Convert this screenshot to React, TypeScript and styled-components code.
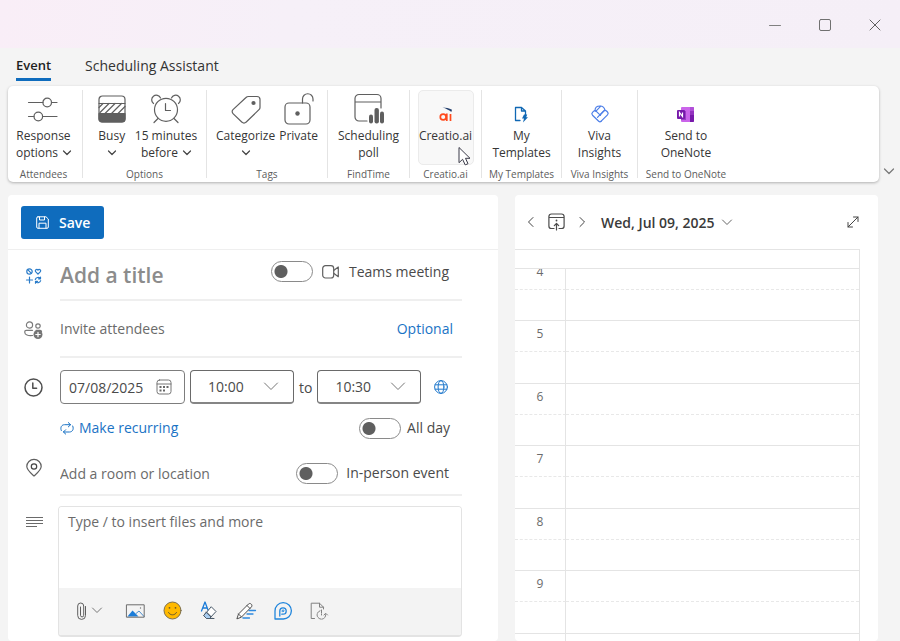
import React from 'react';
import styled, { createGlobalStyle, css } from 'styled-components';

const GlobalStyle = createGlobalStyle`
  *, *::before, *::after { box-sizing: border-box; }
  body { margin: 0; background: #f4f4f4; }
  body, button, input, select, textarea {
    font-family: "Open Sans", "Noto Sans", sans-serif;
    font-size: 14px;
    color: #4a4a4a;
  }
  button { background: none; border: 0; padding: 0; cursor: pointer; }
  svg { display: block; flex: none; overflow: visible; }
`;

const Window = styled.div`
  display: flex;
  flex-direction: column;
  height: 100vh;
  overflow: hidden;
`;

/* Window chrome */
const TitleBar = styled.header`
  display: flex;
  justify-content: flex-end;
  align-items: center;
  gap: 34px;
  flex: none;
  height: 48px;
  padding: 2px 17px 0 0;
  background: linear-gradient(100deg, #f9eef7 0%, #f6f0f8 32%, #f5eff7 100%);
`;
const ChromeButton = styled.button`
  display: grid;
  place-items: center;
  width: 16px;
  height: 16px;
`;

/* Tabs */
const TabBar = styled.nav`
  display: flex;
  gap: 34px;
  flex: none;
  height: 38px;
  padding: 6px 16px 0;
`;
const Tab = styled.button<{ $active?: boolean }>`
  height: 27px;
  line-height: 23px;
  padding-bottom: 4px;
  color: #333;
  ${p => p.$active && css`
    font-weight: 600;
    font-size: 13px;
    color: #1f1f1f;
    background: linear-gradient(#0f6cbd, #0f6cbd) bottom / 100% 3px no-repeat;
  `}
`;

/* Ribbon */
const RibbonRow = styled.div`
  display: flex;
  align-items: flex-end;
  flex: none;
  padding-left: 8px;
`;
const Ribbon = styled.section`
  display: flex;
  flex: 1;
  height: 96px;
  padding-top: 4px;
  background: #fff;
  border-radius: 5px;
  box-shadow: 0 1px 3px rgba(0, 0, 0, 0.28);
`;
const RibbonToggle = styled.button`
  display: grid;
  place-items: center;
  width: 21px;
  height: 22px;
  padding-right: 2px;
`;
const Group = styled.div<{ $width: number; $end?: number }>`
  display: flex;
  flex-direction: column;
  flex: none;
  width: ${p => p.$width}px;
  padding-right: ${p => p.$end ?? 0}px;
`;
const GroupButtons = styled.div<{ $gap?: number; $inset?: number }>`
  display: flex;
  justify-content: center;
  flex: none;
  gap: ${p => p.$gap ?? 0}px;
  height: 75px;
  padding-left: ${p => p.$inset ?? 0}px;
`;
const GroupLabel = styled.span`
  flex: none;
  font-size: 10px;
  line-height: 19px;
  text-align: center;
  color: #5c5c5c;
  white-space: nowrap;
`;
const Divider = styled.span`
  flex: none;
  width: 1px;
  height: 88px;
  background: #e4e4e4;
`;
const RibbonButton = styled.button<{ $hover?: boolean }>`
  position: relative;
  display: flex;
  flex-direction: column;
  align-items: center;
  font-size: 12px;
  line-height: 17px;
  color: #363636;
  white-space: nowrap;
  border: 1px solid transparent;
  border-width: 1px 0;
  border-radius: 5px;
  ${p => p.$hover && css`
    width: 56px;
    border: 1px solid #ebebeb;
    background: #f8f8f8;
  `}
`;
const RibbonIcon = styled.span<{ $small?: boolean }>`
  display: grid;
  place-items: center;
  height: 36px;
  padding-top: ${p => (p.$small ? 10 : 0)}px;
`;
const Line = styled.span`
  display: flex;
  align-items: center;
  justify-content: center;
  gap: 5px;
  height: 17px;
`;
const Pointer = styled.svg`
  position: absolute;
  left: 39px;
  top: 55px;
`;

/* Two panels */
const Main = styled.main`
  display: grid;
  grid-template-columns: 490fr 363fr;
  gap: 17px;
  flex: 1;
  min-height: 0;
  margin-top: 13px;
  padding: 0 22px 0 8px;
`;
const Panel = styled.section`
  display: flex;
  flex-direction: column;
  min-width: 0;
  min-height: 0;
  background: #fff;
  border-radius: 4px;
`;
const CommandBar = styled.div`
  flex: none;
  height: 55px;
  padding: 11px 13px 0;
  border-bottom: 1px solid #efefef;
`;
const SaveButton = styled.button`
  display: flex;
  align-items: center;
  gap: 10px;
  height: 33px;
  padding: 0 14px 0 15px;
  border-radius: 3px;
  background: #0f6cbd;
  color: #fff;
  font-size: 14px;
  font-weight: 600;
`;

/* Form */
const Form = styled.form`
  display: flex;
  flex-direction: column;
  padding-right: 36px;
`;
const Row = styled.div<{ $height: number }>`
  display: grid;
  grid-template-columns: 52px 1fr;
  height: ${p => p.$height}px;
`;
const IconCell = styled.div`
  display: grid;
  place-items: center;
  padding-right: 1px;
`;
const Cell = styled.div<{ $ruled?: boolean; $end?: number; $top?: number }>`
  display: flex;
  align-items: center;
  min-width: 0;
  padding-top: ${p => p.$top ?? 0}px;
  padding-right: ${p => p.$end ?? 0}px;
  border-bottom: ${p => (p.$ruled ? '2px solid #efefef' : '0')};
`;
const Field = styled.input<{ $title?: boolean }>`
  flex: 1;
  min-width: 0;
  padding: 0;
  border: 0;
  outline: 0;
  background: none;
  font-size: ${p => (p.$title ? 21 : 14)}px;
  font-weight: ${p => (p.$title ? 600 : 400)};
  &::placeholder { color: ${p => (p.$title ? '#8c8c8c' : '#6b6b6b')}; opacity: 1; }
`;
const SwitchLabel = styled.label<{ $gap: number; $raised?: boolean }>`
  display: flex;
  align-items: center;
  gap: ${p => p.$gap}px;
  line-height: 20px;
  white-space: nowrap;
  ${p => p.$raised && css`
    align-self: flex-start;
    margin-top: 11px;
  `}
`;
const Switch = styled.input`
  appearance: none;
  flex: none;
  width: 42px;
  height: 21px;
  margin: 0;
  border: 1px solid #8a8a8a;
  border-radius: 11px;
  background: radial-gradient(circle at 9px 50%, #5f5f5f 6px, transparent 7px) #fff;
  &:checked {
    border-color: #0f6cbd;
    background: radial-gradient(circle at 31px 50%, #fff 6px, transparent 7px) #0f6cbd;
  }
`;
const LinkButton = styled.button`
  display: flex;
  align-items: center;
  gap: 5px;
  line-height: 20px;
  color: #1a73c5;
`;
const Spacer = styled.span`
  flex: 1;
`;
const DateBox = styled.label`
  display: flex;
  align-items: center;
  justify-content: space-between;
  width: 125px;
  height: 34px;
  padding: 0 12px 0 8px;
  border: 1px solid #7d7d7d;
  border-radius: 4px;
`;
const DateInput = styled.input`
  width: 78px;
  padding: 0;
  border: 0;
  outline: 0;
  background: none;
`;
const SelectBox = styled.span`
  display: grid;
  width: 104px;
  height: 34px;
  align-items: center;
  border: 1px solid #6a6a6a;
  border-bottom: 2px solid #858585;
  border-radius: 4px;
  & > * { grid-area: 1 / 1; }
  & > svg { justify-self: end; margin-right: 15px; pointer-events: none; }
`;
const TimeSelect = styled.select`
  appearance: none;
  width: 100%;
  height: 100%;
  padding: 0 36px 0 17px;
  border: 0;
  outline: 0;
  background: none;
`;
const TimeFields = styled.div`
  display: flex;
  align-items: center;
  gap: 5px;
`;
const IconButton = styled.button<{ $indent?: number }>`
  display: flex;
  align-items: center;
  gap: 6px;
  margin-left: ${p => p.$indent ?? 0}px;
`;

/* Editor */
const EditorRow = styled.div`
  display: grid;
  grid-template-columns: 50px 1fr;
  margin-top: 10px;
`;
const EditorIcon = styled.div`
  display: flex;
  justify-content: flex-end;
  align-items: flex-start;
  padding: 10px 15px 0 0;
`;
const Editor = styled.div`
  display: flex;
  flex-direction: column;
  border: 1px solid #e3e3e3;
  border-bottom-width: 2px;
  border-radius: 4px;
  overflow: hidden;
`;
const Body = styled.textarea`
  display: block;
  height: 81px;
  padding: 5px 9px;
  border: 0;
  outline: 0;
  resize: none;
  line-height: 20px;
  &::placeholder { color: #6b6b6b; opacity: 1; }
`;
const EditorBar = styled.div`
  display: flex;
  align-items: center;
  gap: 18px;
  height: 47px;
  padding: 0 18px 2px;
  background: #f3f3f3;
`;

/* Calendar */
const DayBar = styled.div`
  display: flex;
  align-items: center;
  flex: none;
  height: 54px;
  padding: 0 19px 0 11px;
`;
const DayNav = styled.div`
  display: flex;
  align-items: center;
  gap: 12px;
`;
const DayPicker = styled.button`
  display: flex;
  align-items: center;
  gap: 7px;
  margin-left: 14px;
  font-weight: 600;
  color: #3a3a3a;
`;
const Day = styled.div`
  display: flex;
  flex-direction: column;
  flex: 1;
  min-height: 0;
  margin-right: 18px;
  border: 1px solid #e4e4e4;
  border-width: 1px 1px 0 0;
  overflow: hidden;
`;
const AllDay = styled.div`
  flex: none;
  height: 19px;
  border-bottom: 1px solid #e4e4e4;
`;
const HoursViewport = styled.div`
  flex: 1;
  min-height: 0;
  overflow: hidden;
`;
const Hours = styled.ol`
  list-style: none;
  margin: -11px 0 0;
  padding: 0;
`;
const Hour = styled.li`
  display: grid;
  grid-template: 31px 1fr / 51px 1fr;
  height: 62px;
  border-top: 1px solid #e4e4e4;
  &:nth-child(even) { height: 63px; }
`;
const Slot = styled.span<{ $label?: boolean; $dashed?: boolean }>`
  border-right: ${p => (p.$label ? '1px solid #e4e4e4' : '0')};
  border-bottom: ${p => (p.$dashed ? '1px dashed #e8e8e8' : '0')};
  padding-top: 3px;
  font-size: 12px;
  line-height: 20px;
  text-align: center;
  color: #6b6b6b;
`;

type IconProps = { children: React.ReactNode; w: number; h: number; color?: string; stroke?: number };
const Icon = ({ children, w, h, color = '#5f5f5f', stroke = 1 }: IconProps) => (
  <svg width={w} height={h} viewBox={`0 0 ${w} ${h}`} fill="none" stroke={color} strokeWidth={stroke}
    strokeLinecap="round" strokeLinejoin="round" aria-hidden="true">{children}</svg>
);
const Chevron = ({ w = 8, color = '#444', stroke = 1.2 }: { w?: number; color?: string; stroke?: number }) => (
  <Icon w={w} h={w / 2 + 2} color={color} stroke={stroke}><path d={`M.5 1 ${w / 2} ${w / 2 + 0.5} ${w - 0.5} 1`} /></Icon>
);

const SlidersIcon = () => (
  <Icon w={30} h={26} stroke={1.2}><path d="M.5 6.500H15M23.500 6.500H29M.5 20.500H6M14.500 20.500H29" /><circle cx="19.200" cy="6.500" r="4.300" /><circle cx="10.300" cy="20.500" r="4.300" /></Icon>
);
const BusyIcon = () => (
  <Icon w={28} h={28} stroke={1.2}>
    <path d="M1 18.500h26V24a3 3 0 0 1-3 3H4a3 3 0 0 1-3-3z" fill="#5f5f5f" />
    <rect x="1" y="1" width="26" height="26" rx="3.500" />
    <path d="M1 8.500h26M2 17.500l9-9M7 18.500l10-10M13.500 18.500l10-10M20 18.500l7-7M1 12.500l4-4" />
  </Icon>
);
const AlarmIcon = () => (
  <Icon w={28} h={28} stroke={1.2}>
    <circle cx="14" cy="14.800" r="11.500" />
    <path d="M13.500 8.500v7h5M6 23.500 2 27.500M22 23.500l4 4M1.500 8.500A4.600 4.600 0 1 1 8.500 3M26.500 8.500A4.600 4.600 0 1 0 19.500 3" />
  </Icon>
);
const TagIcon = () => (
  <Icon w={30} h={29} stroke={1.2}>
    <path d="M17.500 1.500h8.500a3 3 0 0 1 3 3v8c0 1-.4 1.600-1 2.200L15 27.200a2.800 2.800 0 0 1-4 0L2 18.600a2.800 2.800 0 0 1 0-4L15 2.500c.7-.7 1.500-1 2.500-1z" />
    <circle cx="22.500" cy="8" r="2.100" fill="#5f5f5f" stroke="none" />
  </Icon>
);
const LockIcon = () => (
  <Icon w={30} h={32} stroke={1.2}>
    <rect x="1" y="10" width="25" height="21" rx="4" /><path d="M18.500 10V6a5.200 5.200 0 0 1 10.500 0v2" />
    <circle cx="13.500" cy="20.500" r="2.200" fill="#5f5f5f" stroke="none" />
  </Icon>
);
const PollIcon = () => (
  <Icon w={30} h={30} stroke={1.2}>
    <path d="M13 27H5a4 4 0 0 1-4-4V4.500a4 4 0 0 1 4-4h18a4 4 0 0 1 4 4V14M1 8h26" />
    <g fill="#5f5f5f" stroke="none"><rect x="15" y="20.500" width="4" height="9" rx="2" /><rect x="20.500" y="14" width="4.400" height="15.500" rx="2" /><rect x="26" y="17.500" width="4" height="12" rx="2" /></g>
  </Icon>
);
const CreatioIcon = () => (
  <Icon w={14} h={16} color="#ff4a1c" stroke={1.7}>
    <circle cx="4.200" cy="11" r="2.900" /><path d="M7.800 7.500V15M11.500 8v7" strokeLinecap="butt" />
    <path d="M3.500 1.500c3.500 0 6.500.8 9.500 2.200L12.300 6C10 4 7 2.500 3.500 1.500z" fill="#24406e" stroke="none" />
  </Icon>
);
const TemplateIcon = () => (
  <Icon w={14} h={17} color="#1068b4">
    <path d="M6 14.500H1.500V1.500h6l4 3.500v4M7.500 1.500V5h4" strokeWidth="1.300" />
    <path d="M10 8.500h3.200l-1 2.700H14l-5 5.300 1-4H8z" fill="#1068b4" stroke="none" />
  </Icon>
);
const VivaIcon = () => (
  <Icon w={18} h={18} color="#4d7fe8" stroke={1.200}>
    <path d="M10.200 16.200 16.500 9.800a2 2 0 0 0 0-2.800l-1-1a2 2 0 0 0-2.800 0L6.500 12.300" />
    <path d="M10.200 16.200a1.800 1.800 0 0 1-2.500 0L1.500 10.200a2 2 0 0 1 0-2.800l1-1a2 2 0 0 1 2.800 0l4.200 4" />
    <path d="M4 5.800C4 2.800 6.200 1 9 1s4.500 1.600 5 4.300M5 6.200 9.800 1.200M9.500 9.500 13 5.800" />
  </Icon>
);
const OneNoteIcon = () => (
  <svg width="17" height="17" viewBox="0 0 17 17" aria-hidden="true">
    <rect x="4" y="1" width="13" height="15" rx="1" fill="#ca64ea" />
    <path d="M13 1h3a1 1 0 0 1 1 1v3h-4z" fill="#b14fd8" /><path d="M13 5h4v4h-4z" fill="#9332bf" /><path d="M13 9h4v6a1 1 0 0 1-1 1h-3z" fill="#7719aa" />
    <path d="M4 5h5v9H4z" fill="#9a3cc5" />
    <rect y="4" width="8" height="9" rx="1" fill="#7719aa" />
    <path d="M2.500 10.500v-4l3 4v-4" stroke="#fff" strokeWidth="1.200" fill="none" />
  </svg>
);
const PointerIcon = () => (
  <Pointer width="13" height="20" viewBox="0 0 13 20" aria-hidden="true">
    <path d="M1 1.500v15.200l3.600-3.400 2.600 5.600 2.800-1.200-2.500-5.400H12z" fill="#fff" stroke="#3a3a48" strokeWidth="1" />
  </Pointer>
);
const SaveIcon = () => (
  <Icon w={13} h={13} color="#fff">
    <path d="M2 .8h8l2.300 2.200v8a1.300 1.300 0 0 1-1.300 1.300H2A1.300 1.300 0 0 1 .7 11V2A1.300 1.300 0 0 1 2 .8zM3.500 1v3h5V1M3 12V7.200h7V12" />
  </Icon>
);
const CharmsIcon = () => (
  <Icon w={16} h={16} color="#2b7cc9" stroke={1.200}>
    <circle cx="3.500" cy="3.500" r="2.700" /><path d="M1.700 1.700l3.700 3.700" />
    <path d="M12 6.200 9.600 3.700C8.600 2.500 10.500.2 12 2c1.500-1.800 3.400.5 2.400 1.700z" />
    <path d="M3.500 9v6M.5 12h6M9.300 11.500c.6-2 3.800-3 5.200-.8V9M14.500 10.800h-2M14.700 12.700c-.6 2-3.800 3-5.200.8V15.200M9.500 13.400h2" />
  </Icon>
);
const PeopleIcon = () => (
  <Icon w={19} h={18} color="#7a7a7a" stroke={1.200}>
    <circle cx="5.500" cy="4" r="3.100" /><circle cx="14" cy="5" r="2.200" />
    <path d="M8.500 14.500C4 15 .8 13.800.8 11.500V10.500c0-.8.600-1.200 1.300-1.200h6.400M12 9.300h4c1 0 1.500.5 1.500 1.200" />
    <circle cx="14" cy="13.500" r="4.500" fill="#757575" stroke="none" /><path d="M14 11.300v4.400M11.800 13.500h4.400" stroke="#fff" />
  </Icon>
);
const VideoIcon = () => (
  <Icon w={18} h={14} stroke={1.200}><rect x=".7" y=".7" width="11" height="12.300" rx="2.800" /><path d="M12 5.300 16.300 2v9.700L12 8.500" /></Icon>
);
const ClockIcon = () => (
  <Icon w={19} h={19} stroke={1.500} color="#4f4f4f"><circle cx="9.500" cy="9.500" r="8.500" /><path d="M8.800 5v5.200h3.800" /></Icon>
);
const CalendarIcon = () => (
  <Icon w={16} h={16} color="#777">
    <rect x="1" y="1" width="14" height="14" rx="2.500" /><path d="M1 5h14" />
    <g fill="#666" stroke="none"><rect x="7" y="7" width="2" height="2" /><rect x="10.500" y="7" width="2" height="2" /><rect x="3.500" y="7" width="2" height="2" /><rect x="3.500" y="10.500" width="2" height="2" /><rect x="7" y="10.500" width="2" height="2" /></g>
  </Icon>
);
const GlobeIcon = () => (
  <Icon w={14} h={14} color="#1f78cc"><circle cx="7" cy="7" r="6.400" /><ellipse cx="7" cy="7" rx="2.900" ry="6.400" /><path d="M1.200 4.800h11.600M1.200 9.200h11.600" /></Icon>
);
const RepeatIcon = () => (
  <Icon w={14} h={13} color="#1a73c5"><path d="M1.300 8.500C-.2 5 2 2.700 4.500 2.700h6M8.300.6l2.300 2.100-2.300 2.200M12.700 4c1.600 3.500-.6 6-3.200 6h-6M5.700 7.700 3.400 10l2.300 2.100" /></Icon>
);
const PinIcon = () => (
  <Icon w={16} h={18} stroke={1.200}><path d="M8 17C4 13.500 .8 11 .8 7.600a7.200 7.200 0 0 1 14.400 0C15.200 11 12 13.500 8 17z" /><circle cx="8" cy="7.500" r="2.700" stroke="#444" /></Icon>
);
const LinesIcon = () => (
  <Icon w={17} h={12} color="#6a6a6a"><path d="M0 1.500h17M0 4.500h17M0 7.500h17M0 10.500h11" strokeLinecap="butt" /></Icon>
);
const ClipIcon = () => (
  <Icon w={9} h={18}><path d="M8.500 4.500v9a3.900 3.900 0 0 1-7.800 0V4a3 3 0 0 1 6 0v9.300a1.600 1.600 0 0 1-3.200 0V5" /></Icon>
);
const PictureIcon = () => (
  <Icon w={19} h={14} color="#6c6c6c">
    <path d="M1.500 12.500 6.500 6.500l6 6z" fill="#1b7cd8" stroke="none" /><path d="m10 9.500 3-2.500 5 5.500" stroke="#4b8ccb" />
    <rect x=".8" y=".8" width="17.400" height="12.400" /><circle cx="14.500" cy="4" r=".7" fill="#777" stroke="none" />
  </Icon>
);
const SmileIcon = () => (
  <Icon w={19} h={19} color="#6b5a2c"><circle cx="9.500" cy="9.500" r="8.500" fill="#ffb900" stroke="#7a6e50" /><path d="M5.500 11.500c1.500 3.200 6.500 3.200 8 0" /><circle cx="6.500" cy="6.800" r=".9" fill="#6b5a2c" stroke="none" /><circle cx="12.500" cy="6.800" r=".9" fill="#6b5a2c" stroke="none" /></Icon>
);
const ClearIcon = () => (
  <Icon w={18} h={19} color="#4a5a6a">
    <path d="M1.500 10 5 1l3 8M2.700 7H7" stroke="#1b7cd8" strokeWidth="1.300" />
    <path d="m11.500 6 4.500 4.500-6.500 7H6.500L4 15zM6.500 11l5 5" fill="#fff" />
    <path d="m6.300 11.500 4.700 4.500-1.500 1.500h-3L4 15z" fill="#a9cdf0" /><path d="M9.500 17.500H14" />
  </Icon>
);
const InkIcon = () => (
  <Icon w={20} h={18} color="#4d4d4d">
    <path d="M13 8.500h6.500M11 12h6M7 16h6.500" stroke="#2f8be0" strokeWidth="1.300" />
    <path d="M1 16.500 2.500 12 12.500 2c1.700-1.500 4.500.8 3 2.800L5.500 15zM2.500 12l3 3M11 3.500l3 3" fill="#fff" />
  </Icon>
);
const LoopIcon = () => (
  <Icon w={18} h={18} color="#1f85dc" stroke={1.300}>
    <path d="M1 17V9A8.200 8.200 0 1 1 9 17z" />
    <path d="M5.800 14V9a3.200 3.200 0 1 1 3.200 3.200H7.800" /><path d="M8.200 9.500V8.800a.9.900 0 1 1 .9.900" strokeWidth="1" />
  </Icon>
);
const FileIcon = () => (
  <Icon w={18} h={18} color="#808080">
    <path d="M4.500 16.500H1.200V1.200h8.300l4 4V7M9.500 1.200v4h4" />
    <path d="M11.500 8v5M10 8.800a4.300 4.300 0 1 0 5.700 3.800M14 13l1.700-1.800 1.800 1.800" strokeDasharray="3 1" />
  </Icon>
);
const TodayIcon = () => (
  <Icon w={17} h={18} color="#4c4c4c" stroke={1.200}>
    <path d="M6 15.500H3.500a2.600 2.600 0 0 1-2.600-2.600V3.500A2.600 2.600 0 0 1 3.500 1h10a2.600 2.600 0 0 1 2.600 2.500v9.400a2.600 2.600 0 0 1-2.600 2.600H11M1 4.500h15M8.500 17v-6M6.300 12.700l2.200-2.200 2.200 2.200" />
    <circle cx="8.500" cy="7.500" r=".9" fill="#4c4c4c" stroke="none" />
  </Icon>
);
const ExpandIcon = () => (
  <Icon w={12} h={12} color="#444"><path d="M1 11 11 1M6.500 1H11v4.500M1 6.500V11h4.500" /></Icon>
);

const TimePicker = ({ label, value }: { label: string; value: string }) => (
  <SelectBox>
    <TimeSelect aria-label={label} defaultValue={value}>
      <option>10:00</option><option>10:30</option><option>11:00</option>
    </TimeSelect>
    <Chevron w={14} color="#777" stroke={1} />
  </SelectBox>
);

const AddinGroup = ({ width, icon, lines, label }: { width: number; icon: React.ReactNode; lines: string[]; label: string }) => (
  <Group $width={width}>
    <GroupButtons>
      <RibbonButton type="button"><RibbonIcon $small>{icon}</RibbonIcon>{lines.map(l => <Line key={l}>{l}</Line>)}</RibbonButton>
    </GroupButtons>
    <GroupLabel>{label}</GroupLabel>
  </Group>
);

export default function App() {
  return (
    <Window>
      <GlobalStyle />
      <TitleBar>
        <ChromeButton aria-label="Minimize"><Icon w={12} h={12} color="#808080"><path d="M.5 6.500h11" /></Icon></ChromeButton>
        <ChromeButton aria-label="Maximize"><Icon w={12} h={12} color="#707070"><rect x=".5" y=".5" width="11" height="11" rx="1.500" /></Icon></ChromeButton>
        <ChromeButton aria-label="Close"><Icon w={12} h={12} color="#606060"><path d="M1 1l10 10M11 1 1 11" /></Icon></ChromeButton>
      </TitleBar>
      <TabBar>
        <Tab $active>Event</Tab>
        <Tab>Scheduling Assistant</Tab>
      </TabBar>
      <RibbonRow>
        <Ribbon>
          <Group $width={74} $end={3}>
            <GroupButtons>
              <RibbonButton><RibbonIcon><SlidersIcon /></RibbonIcon><Line>Response</Line><Line>options <Chevron /></Line></RibbonButton>
            </GroupButtons>
            <GroupLabel>Attendees</GroupLabel>
          </Group>
          <Divider />
          <Group $width={123}>
            <GroupButtons $gap={9} $inset={6}>
              <RibbonButton><RibbonIcon><BusyIcon /></RibbonIcon><Line>Busy</Line><Line><Chevron /></Line></RibbonButton>
              <RibbonButton><RibbonIcon><AlarmIcon /></RibbonIcon><Line>15 minutes</Line><Line>before <Chevron /></Line></RibbonButton>
            </GroupButtons>
            <GroupLabel>Options</GroupLabel>
          </Group>
          <Divider />
          <Group $width={120}>
            <GroupButtons $gap={4}>
              <RibbonButton><RibbonIcon><TagIcon /></RibbonIcon><Line>Categorize</Line><Line><Chevron /></Line></RibbonButton>
              <RibbonButton><RibbonIcon><LockIcon /></RibbonIcon><Line>Private</Line></RibbonButton>
            </GroupButtons>
            <GroupLabel>Tags</GroupLabel>
          </Group>
          <Divider />
          <Group $width={81}>
            <GroupButtons>
              <RibbonButton><RibbonIcon><PollIcon /></RibbonIcon><Line>Scheduling</Line><Line>poll</Line></RibbonButton>
            </GroupButtons>
            <GroupLabel>FindTime</GroupLabel>
          </Group>
          <Divider />
          <Group $width={71}>
            <GroupButtons>
              <RibbonButton $hover><RibbonIcon $small><CreatioIcon /></RibbonIcon><Line>Creatio.ai</Line><PointerIcon /></RibbonButton>
            </GroupButtons>
            <GroupLabel>Creatio.ai</GroupLabel>
          </Group>
          <Divider />
          <AddinGroup width={79} icon={<TemplateIcon />} lines={['My', 'Templates']} label="My Templates" />
          <Divider />
          <AddinGroup width={75} icon={<VivaIcon />} lines={['Viva', 'Insights']} label="Viva Insights" />
          <Divider />
          <AddinGroup width={96} icon={<OneNoteIcon />} lines={['Send to', 'OneNote']} label="Send to OneNote" />
        </Ribbon>
        <RibbonToggle aria-label="Ribbon display options"><Chevron w={10} color="#777" /></RibbonToggle>
      </RibbonRow>
      <Main>
        <Panel>
          <CommandBar><SaveButton><SaveIcon />Save</SaveButton></CommandBar>
          <Form onSubmit={e => e.preventDefault()}>
            <Row $height={51}>
              <IconCell><CharmsIcon /></IconCell>
              <Cell $ruled $end={13}>
                <Field $title aria-label="Title" placeholder="Add a title" />
                <SwitchLabel $gap={9} $raised><Switch type="checkbox" role="switch" /><VideoIcon />Teams meeting</SwitchLabel>
              </Cell>
            </Row>
            <Row $height={57}>
              <IconCell><PeopleIcon /></IconCell>
              <Cell $ruled $end={9}>
                <Field aria-label="Attendees" placeholder="Invite attendees" />
                <LinkButton type="button">Optional</LinkButton>
              </Cell>
            </Row>
            <Row $height={58}>
              <IconCell><ClockIcon /></IconCell>
              <TimeFields>
                <DateBox><DateInput aria-label="Start date" defaultValue="07/08/2025" /><CalendarIcon /></DateBox>
                <TimePicker label="Start time" value="10:00" />
                to
                <TimePicker label="End time" value="10:30" />
                <IconButton type="button" $indent={8} aria-label="Time zones"><GlobeIcon /></IconButton>
              </TimeFields>
            </Row>
            <Row $height={24}>
              <span />
              <Cell $end={12}>
                <LinkButton type="button"><RepeatIcon />Make recurring</LinkButton>
                <Spacer />
                <SwitchLabel $gap={6}><Switch type="checkbox" role="switch" />All day</SwitchLabel>
              </Cell>
            </Row>
            <Row $height={56}>
              <IconCell><PinIcon /></IconCell>
              <Cell $ruled $end={13} $top={12}>
                <Field aria-label="Location" placeholder="Add a room or location" />
                <SwitchLabel $gap={8}><Switch type="checkbox" role="switch" />In-person event</SwitchLabel>
              </Cell>
            </Row>
            <EditorRow>
              <EditorIcon><LinesIcon /></EditorIcon>
              <Editor>
                <Body aria-label="Description" placeholder="Type / to insert files and more" />
                <EditorBar>
                  <IconButton type="button" aria-label="Attach file"><ClipIcon /><Chevron w={10} color="#777" stroke={1} /></IconButton>
                  <IconButton type="button" $indent={6} aria-label="Insert picture"><PictureIcon /></IconButton>
                  <IconButton type="button" aria-label="Insert emoji"><SmileIcon /></IconButton>
                  <IconButton type="button" aria-label="Clear formatting"><ClearIcon /></IconButton>
                  <IconButton type="button" aria-label="Draw"><InkIcon /></IconButton>
                  <IconButton type="button" aria-label="Loop component"><LoopIcon /></IconButton>
                  <IconButton type="button" aria-label="Insert template"><FileIcon /></IconButton>
                </EditorBar>
              </Editor>
            </EditorRow>
          </Form>
        </Panel>
        <Panel>
          <DayBar>
            <DayNav>
              <IconButton aria-label="Previous day"><Icon w={10} h={10} color="#444"><path d="M7 .5 2.500 5 7 9.500" /></Icon></IconButton>
              <IconButton aria-label="Today"><TodayIcon /></IconButton>
              <IconButton aria-label="Next day"><Icon w={10} h={10} color="#444"><path d="M3 .5 7.500 5 3 9.500" /></Icon></IconButton>
            </DayNav>
            <DayPicker>Wed, Jul 09, 2025<Chevron w={10} color="#666" stroke={1} /></DayPicker>
            <Spacer />
            <IconButton aria-label="Expand"><ExpandIcon /></IconButton>
          </DayBar>
          <Day>
            <AllDay />
            <HoursViewport>
              <Hours>
                {['4', '5', '6', '7', '8', '9', ''].map(h => (
                  <Hour key={h}>
                    <Slot $label $dashed>{h}</Slot><Slot $dashed />
                    <Slot $label /><Slot />
                  </Hour>
                ))}
              </Hours>
            </HoursViewport>
          </Day>
        </Panel>
      </Main>
    </Window>
  );
}
